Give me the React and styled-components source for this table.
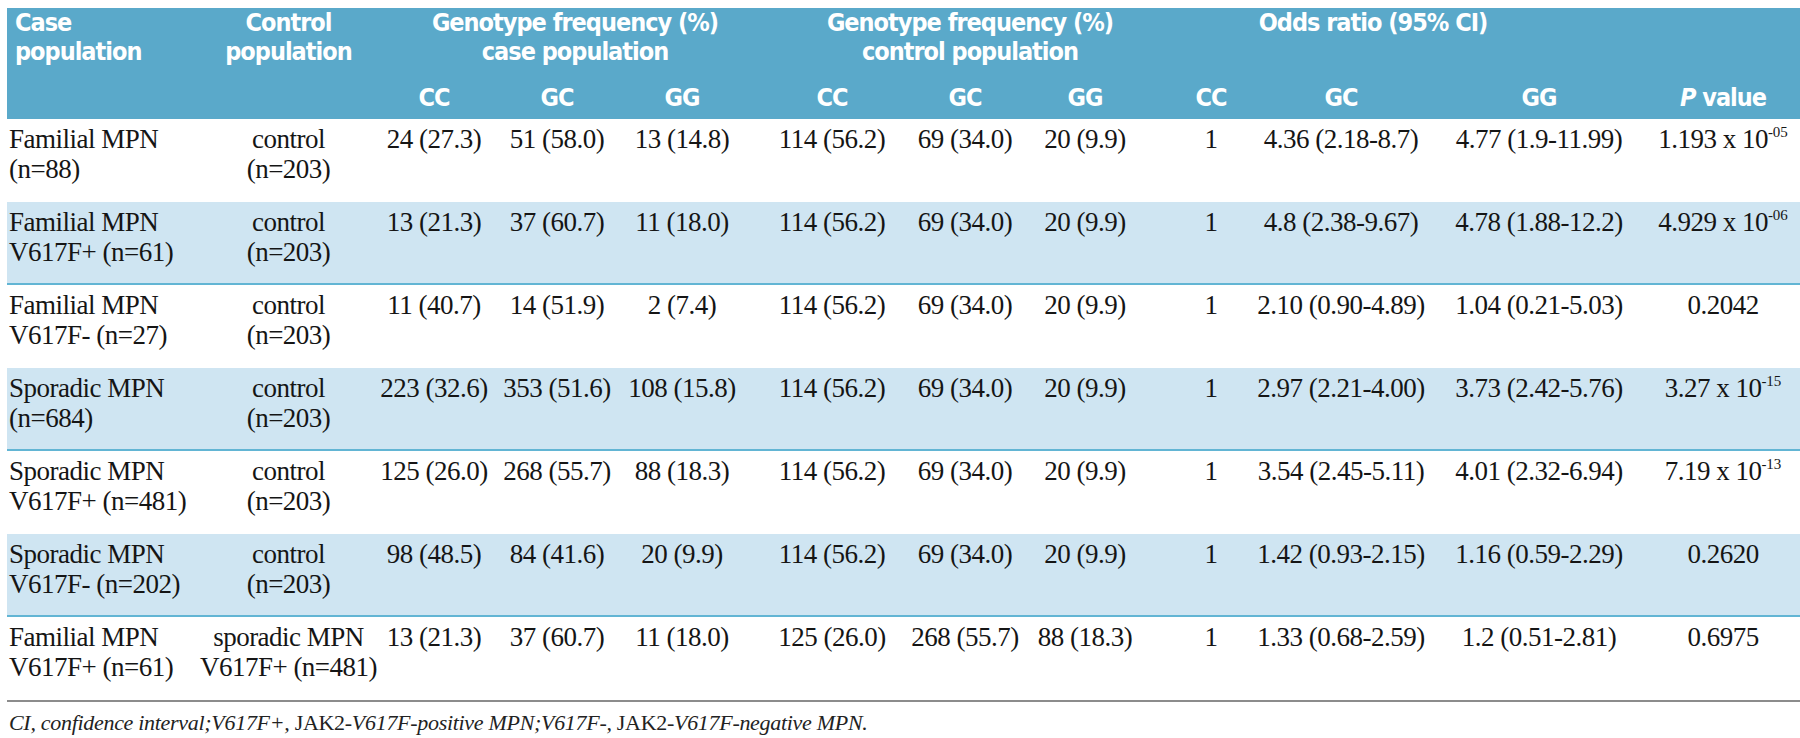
import React from "react";
import styled, { createGlobalStyle } from "styled-components";

const COLS = "184px 195px 96px 150px 100px 200px 66px 174px 78px 182px 214px 154px";

const GlobalStyle = createGlobalStyle`
  html, body {
    margin: 0;
    padding: 0;
    background: #ffffff;
  }
`;

const Page = styled.div`
  padding: 8px 0 0 7px;
  width: 1793px;
`;

const Head = styled.div`
  display: grid;
  grid-template-columns: ${COLS};
  grid-template-rows: 58px 29px;
  row-gap: 17px;
  padding: 0 0 7px;
  background: #5aa9ca;
  color: #ffffff;
  font-family: "DejaVu Sans Condensed", "DejaVu Sans", sans-serif;
  font-weight: 700;
  font-size: 25px;
  letter-spacing: -1px;
  line-height: 29px;
`;

const HeadCell = styled.div`
  grid-column: ${(p) => p.$col};
  grid-row: ${(p) => p.$row || 1};
  display: flex;
  flex-direction: column;
  align-items: ${(p) => (p.$align === "left" ? "flex-start" : "center")};
  padding-left: ${(p) => (p.$align === "left" ? 8 : p.$pl || 0)}px;
  padding-right: ${(p) => p.$pr || 0}px;
  white-space: nowrap;
`;

const Row = styled.div`
  display: grid;
  grid-template-columns: ${COLS};
  height: 83px;
  box-sizing: border-box;
  padding-top: 5px;
  background: ${(p) => (p.$shaded ? "#cfe5f2" : "#ffffff")};
  border-bottom: 2px solid ${(p) => (p.$shaded ? "#62b5d4" : "transparent")};
  font-family: "Liberation Serif", "Times New Roman", serif;
  font-size: 27px;
  letter-spacing: -0.5px;
  line-height: 30px;
  color: #151515;
`;

const Cell = styled.div`
  display: flex;
  flex-direction: column;
  align-items: ${(p) => (p.$align === "left" ? "flex-start" : "center")};
  padding-left: ${(p) => (p.$align === "left" ? "2px" : "0")};
  white-space: nowrap;
`;

const Sup = styled.sup`
  font-size: 15px;
  vertical-align: 11px;
  line-height: 0;
  letter-spacing: 0;
`;

const Rule = styled.div`
  height: 2px;
  background: #8c8c8c;
`;

const Note = styled.p`
  margin: 8px 0 0 2px;
  font-family: "Liberation Serif", "Times New Roman", serif;
  font-style: italic;
  font-size: 22px;
  letter-spacing: -0.3px;
  color: #222222;
`;

const Upright = styled.span`
  font-style: normal;
`;

const rows = [
  ["Familial MPN", "(n=88)", "control", "(n=203)", ["24 (27.3)", "51 (58.0)", "13 (14.8)", "114 (56.2)", "69 (34.0)", "20 (9.9)", "1", "4.36 (2.18-8.7)", "4.77 (1.9-11.99)"], ["1.193 x 10", "-05"]],
  ["Familial MPN", "V617F+ (n=61)", "control", "(n=203)", ["13 (21.3)", "37 (60.7)", "11 (18.0)", "114 (56.2)", "69 (34.0)", "20 (9.9)", "1", "4.8 (2.38-9.67)", "4.78 (1.88-12.2)"], ["4.929 x 10", "-06"]],
  ["Familial MPN", "V617F- (n=27)", "control", "(n=203)", ["11 (40.7)", "14 (51.9)", "2 (7.4)", "114 (56.2)", "69 (34.0)", "20 (9.9)", "1", "2.10 (0.90-4.89)", "1.04 (0.21-5.03)"], ["0.2042"]],
  ["Sporadic MPN", "(n=684)", "control", "(n=203)", ["223 (32.6)", "353 (51.6)", "108 (15.8)", "114 (56.2)", "69 (34.0)", "20 (9.9)", "1", "2.97 (2.21-4.00)", "3.73 (2.42-5.76)"], ["3.27 x 10", "-15"]],
  ["Sporadic MPN", "V617F+ (n=481)", "control", "(n=203)", ["125 (26.0)", "268 (55.7)", "88 (18.3)", "114 (56.2)", "69 (34.0)", "20 (9.9)", "1", "3.54 (2.45-5.11)", "4.01 (2.32-6.94)"], ["7.19 x 10", "-13"]],
  ["Sporadic MPN", "V617F- (n=202)", "control", "(n=203)", ["98 (48.5)", "84 (41.6)", "20 (9.9)", "114 (56.2)", "69 (34.0)", "20 (9.9)", "1", "1.42 (0.93-2.15)", "1.16 (0.59-2.29)"], ["0.2620"]],
  ["Familial MPN", "V617F+ (n=61)", "sporadic MPN", "V617F+ (n=481)", ["13 (21.3)", "37 (60.7)", "11 (18.0)", "125 (26.0)", "268 (55.7)", "88 (18.3)", "1", "1.33 (0.68-2.59)", "1.2 (0.51-2.81)"], ["0.6975"]],
];

const subs = ["CC", "GC", "GG", "CC", "GC", "GG", "CC", "GC", "GG"];

export default function App() {
  return (
    <Page>
      <GlobalStyle />
      <Head>
        <HeadCell $col="1" $align="left"><span>Case</span><span>population</span></HeadCell>
        <HeadCell $col="2"><span>Control</span><span>population</span></HeadCell>
        <HeadCell $col="3 / 6" $pl={32}><span>Genotype frequency (%)</span><span>case population</span></HeadCell>
        <HeadCell $col="6 / 9" $pl={36}><span>Genotype frequency (%)</span><span>control population</span></HeadCell>
        <HeadCell $col="9 / 12" $pr={72}><span>Odds ratio (95% CI)</span></HeadCell>
        {subs.map((s, i) => (
          <HeadCell key={i} $col={String(i + 3)} $row="2"><span>{s}</span></HeadCell>
        ))}
        <HeadCell $col="12" $row="2"><span><i>P</i> value</span></HeadCell>
      </Head>
      {rows.map((r, i) => (
        <Row key={i} $shaded={i % 2 === 1}>
          <Cell $align="left"><span>{r[0]}</span><span>{r[1]}</span></Cell>
          <Cell><span>{r[2]}</span><span>{r[3]}</span></Cell>
          {r[4].map((v, j) => (
            <Cell key={j}><span>{v}</span></Cell>
          ))}
          <Cell>
            <span>
              {r[5][0]}
              {r[5][1] && <Sup>{r[5][1]}</Sup>}
            </span>
          </Cell>
        </Row>
      ))}
      <Rule />
      <Note>
        CI, confidence interval;V617F+, <Upright>JAK2</Upright>-V617F-positive MPN;V617F-, <Upright>JAK2</Upright>-V617F-negative MPN.
      </Note>
    </Page>
  );
}
